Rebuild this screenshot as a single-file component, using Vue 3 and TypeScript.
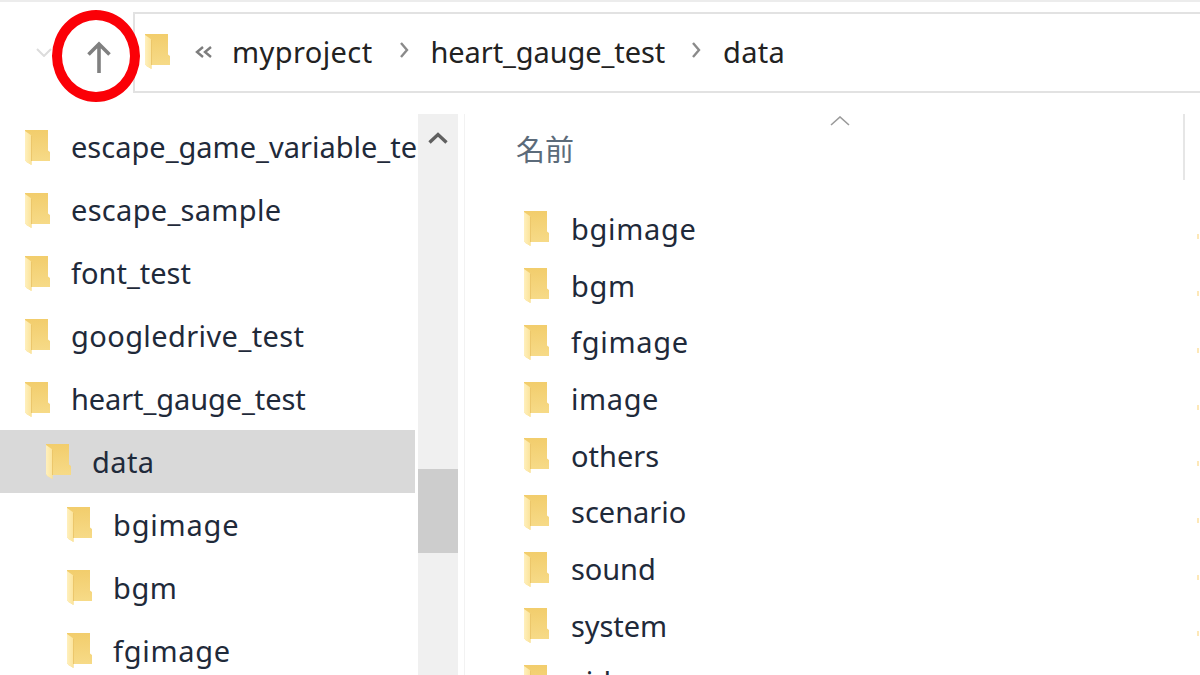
<script setup lang="ts">
interface TreeRow { name: string; level: number; selected?: boolean; track?: number }
interface FileRow { name: string; track?: number }
const tree: TreeRow[] = [
  { name: 'escape_game_variable_test', level: 0 },
  { name: 'escape_sample', level: 0, track: 0.3 },
  { name: 'font_test', level: 0 },
  { name: 'googledrive_test', level: 0, track: 0.4 },
  { name: 'heart_gauge_test', level: 0, track: -0.1 },
  { name: 'data', level: 1, selected: true, track: 0.4 },
  { name: 'bgimage', level: 2, track: 0.8 },
  { name: 'bgm', level: 2, track: 0.6 },
  { name: 'fgimage', level: 2, track: 0.7 },
]
const files: FileRow[] = [
  { name: 'bgimage', track: 0.7 },
  { name: 'bgm', track: 0.7 },
  { name: 'fgimage', track: 0.7 },
  { name: 'image', track: 0.6 },
  { name: 'others' },
  { name: 'scenario' },
  { name: 'sound', track: -0.1 },
  { name: 'system', track: -0.1 },
  { name: 'video' },
]
const levelClass = (l: number): string => `lv${l}`
const spacing = (t?: number) => (t ? { letterSpacing: `${t}px` } : undefined)
</script>

<template>
  <div class="window">
    <svg class="defs" width="0" height="0" aria-hidden="true">
      <defs>
        <linearGradient id="fback" x1="0" y1="0" x2="0" y2="1">
          <stop offset="0" stop-color="#f2cd6c"/>
          <stop offset="1" stop-color="#f7dc8b"/>
        </linearGradient>
        <linearGradient id="fflap" x1="0" y1="0" x2="1" y2="0">
          <stop offset="0" stop-color="#fff0bd"/>
          <stop offset="1" stop-color="#fbe39a"/>
        </linearGradient>
        <symbol id="folder" viewBox="0 0 25 35">
          <path d="M0 0H23V20.5L25 22V31H6.5V35L1.5 32L0 30Z" fill="url(#fback)"/>
          <path d="M0 1L6.5 5.5V35L1.5 32L0 30Z" fill="url(#fflap)"/>
          <path d="M6.5 5.5V31" stroke="#e9c263" stroke-width=".8" fill="none"/>
        </symbol>
      </defs>
    </svg>
    <header class="toolbar">
      <svg class="back" viewBox="0 0 16 9" width="16" height="9"><path d="M1 1l7 7 7-7" fill="none" stroke="#dcdcdc" stroke-width="2"/></svg>
      <svg class="up" viewBox="0 0 26 32" width="26" height="32"><path d="M13 32V3M2.5 13.5L13 3l10.5 10.5" fill="none" stroke="#808080" stroke-width="3.6"/></svg>
      <div class="address">
        <svg class="folder addr-folder" width="25" height="35"><use href="#folder"/></svg>
        <svg class="dbl" viewBox="0 0 18 12" width="18" height="12"><path d="M8 1L2 6l6 5M16 1l-6 5 6 5" fill="none" stroke="#7d7d7d" stroke-width="2.4"/></svg>
        <span class="crumb c1">myproject</span>
        <svg class="sep" viewBox="0 0 10 16" width="10" height="16"><path d="M2 1l6 7-6 7" fill="none" stroke="#8a8a8a" stroke-width="2.4"/></svg>
        <span class="crumb c2">heart_gauge_test</span>
        <svg class="sep" viewBox="0 0 10 16" width="10" height="16"><path d="M2 1l6 7-6 7" fill="none" stroke="#8a8a8a" stroke-width="2.4"/></svg>
        <span class="crumb c3">data</span>
      </div>
      <div class="ring"></div>
    </header>

    <div class="body">
      <nav class="tree">
        <div v-for="row in tree" :key="row.name + row.level" class="tree-row" :class="[levelClass(row.level), { selected: row.selected }]">
          <svg class="folder" width="25" height="35"><use href="#folder"/></svg>
          <span class="label" :style="spacing(row.track)">{{ row.name }}</span>
        </div>
      </nav>
      <div class="scrollbar">
        <svg class="sb-up" viewBox="0 0 20 12" width="20" height="12"><path d="M1.5 10.5L10 2.5l8.5 8" fill="none" stroke="#606060" stroke-width="3.4"/></svg>
        <div class="thumb"></div>
      </div>
      <main class="list">
        <div class="list-head">
          <svg class="sort" viewBox="0 0 20 10" width="20" height="10"><path d="M1 9l9-8 9 8" fill="none" stroke="#9a9a9a" stroke-width="1.6"/></svg>
          <span class="col-name">名前</span>
          <span class="col-div"></span>
        </div>
        <div v-for="f in files" :key="f.name" class="file-row">
          <svg class="folder" width="25" height="35"><use href="#folder"/></svg>
          <span class="label" :style="spacing(f.track)">{{ f.name }}</span>
          <span class="next-col"></span>
        </div>
      </main>
    </div>
  </div>
</template>

<style scoped>
.window {
  width: 1200px;
  height: 675px;
  overflow: hidden;
  background: #fff;
  font-family: "Noto Sans", "Noto Sans CJK JP", sans-serif;
  font-size: 29px;
  color: #1f2a3a;
  display: flex;
  flex-direction: column;
}
.defs { position: absolute; }
.toolbar {
  position: relative;
  height: 114px;
  flex: none;
  border-top: 2px solid #ececec;
  box-sizing: border-box;
  padding: 10px 0 0 36px;
  display: flex;
  align-items: flex-start;
}
.back { margin-top: 36px; flex: none; }
.up { margin: 29px 0 0 34px; flex: none; }
.address {
  margin-left: 21px;
  flex: 1;
  height: 81px;
  box-sizing: border-box;
  border: solid #e2e2e2;
  border-width: 2px 0 2px 2px;
  display: flex;
  align-items: center;
  color: #222;
}
.addr-folder { margin: -2px 0 0 10px; flex: none; }
.dbl { margin-left: 25px; margin-top: -2px; flex: none; }
.crumb { line-height: 1; margin-top: -3px; }
.c1 { margin-left: 19px; letter-spacing: 0.4px; }
.c2 { margin-left: 22px; letter-spacing: -0.1px; }
.c3 { margin-left: 22px; letter-spacing: 0.3px; }
.sep { margin-left: 26px; margin-top: -6px; flex: none; }
.ring {
  position: absolute;
  left: 52px;
  top: 8px;
  width: 88px;
  height: 92px;
  box-sizing: border-box;
  border: 10px solid #fb0007;
  border-radius: 50%;
}
.body { flex: 1; display: flex; min-height: 0; }
.tree {
  width: 417px;
  margin-right: 1px;
  flex: none;
  overflow: hidden;
  padding-top: 2px;
}
.tree-row {
  height: 62.9px;
  display: flex;
  align-items: center;
  white-space: nowrap;
  width: 415px;
  box-sizing: border-box;
}
.tree-row .label { margin-left: 21px; margin-top: -1px; }
.lv0 { padding-left: 25px; }
.lv1 { padding-left: 46px; }
.lv2 { padding-left: 67px; }
.selected { background: #d9d9d9; }
.folder { flex: none; }
.scrollbar {
  position: relative;
  width: 40px;
  flex: none;
  background: #f0f0f0;
  padding-top: 18px;
  box-sizing: border-box;
  display: flex;
  flex-direction: column;
  align-items: center;
}
.sb-up { flex: none; }
.thumb {
  width: 40px;
  height: 84px;
  margin-top: 325px;
  background: #cdcdcd;
}
.list {
  flex: 1;
  min-width: 0;
  margin-left: 6px;
  border-left: 1px solid #f2f2f2;
}
.list-head {
  position: relative;
  height: 86.6px;
  box-sizing: border-box;
  padding: 16px 0 0 51px;
}
.col-name { color: #5c6b7a; line-height: 40px; display: block; }
.sort { position: absolute; left: 365px; top: 2px; }
.col-div {
  position: absolute;
  left: 718px;
  top: 0;
  width: 2px;
  height: 66px;
  background: #e6e6e6;
}
.file-row {
  height: 56.7px;
  display: flex;
  align-items: center;
  padding-left: 59px;
}
.file-row .label { margin-left: 22px; margin-top: -1px; }
.next-col {
  margin-left: auto;
  margin-top: 16px;
  margin-right: 1px;
  width: 2px;
  height: 5px;
  background: #fde8b8;
}
</style>
